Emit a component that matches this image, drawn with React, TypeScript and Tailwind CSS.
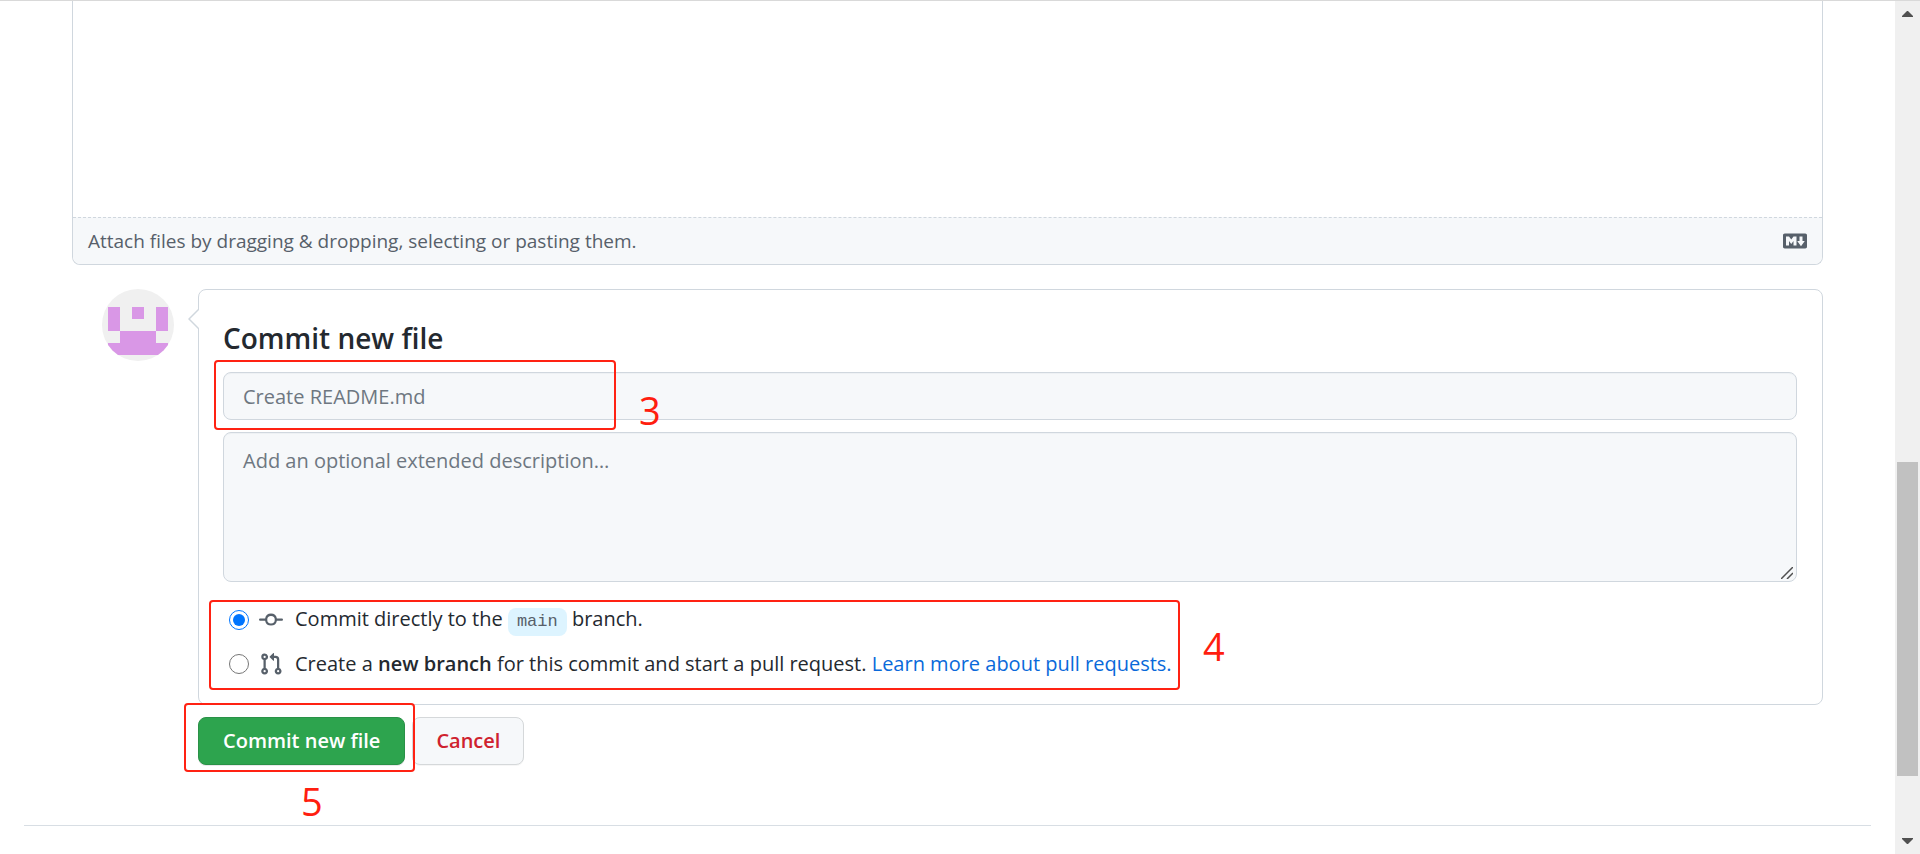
import type { ReactNode } from "react";

function CommitIcon() {
  return (
    <svg viewBox="0 0 16 16" className="size-6 shrink-0 fill-[#57606a]" aria-hidden="true">
      <path
        fillRule="evenodd"
        d="M10.5 7.75a2.5 2.5 0 11-5 0 2.5 2.5 0 015 0zm1.43.75a4.002 4.002 0 01-7.86 0H.75a.75.75 0 110-1.5h3.32a4.001 4.001 0 017.86 0h3.32a.75.75 0 110 1.5h-3.32z"
      />
    </svg>
  );
}

function PullRequestIcon() {
  return (
    <svg viewBox="0 0 16 16" className="size-6 shrink-0 fill-[#57606a]" aria-hidden="true">
      <path
        fillRule="evenodd"
        d="M7.177 3.073L9.573.677A.25.25 0 0110 .854v4.792a.25.25 0 01-.427.177L7.177 3.427a.25.25 0 010-.354zM3.75 2.5a.75.75 0 100 1.5.75.75 0 000-1.5zm-2.25.75a2.25 2.25 0 113 2.122v5.256a2.251 2.251 0 11-1.5 0V5.372A2.25 2.25 0 011.5 3.25zM11 2.5h-1V4h1a1 1 0 011 1v5.628a2.251 2.251 0 101.5 0V5A2.5 2.5 0 0011 2.5zm1 10.25a.75.75 0 111.5 0 .75.75 0 01-1.5 0zM3.75 12a.75.75 0 100 1.5.75.75 0 000-1.5z"
      />
    </svg>
  );
}

function MarkdownIcon() {
  return (
    <svg viewBox="0 0 16 16" className="size-6 fill-[#57606a]" aria-hidden="true">
      <path
        fillRule="evenodd"
        d="M14.85 3H1.15C.52 3 0 3.52 0 4.15v7.69C0 12.48.52 13 1.15 13h13.69c.64 0 1.15-.52 1.15-1.15v-7.7C16 3.52 15.48 3 14.85 3zM9 11H7V8L5.5 9.92 4 8v3H2V5h2l1.5 2L7 5h2v6zm2.99.5L9.5 8H11V5h2v3h1.5l-2.51 3.5z"
      />
    </svg>
  );
}

function Avatar() {
  return (
    <svg viewBox="0 0 72 72" className="size-[72px] shrink-0 rounded-full bg-[#f0f0f0]" aria-hidden="true">
      <path
        fill="#d997e6"
        d="M6 18h12v24H6zM30 18h12v12H30zM54 18h12v24H54zM18 42h36v12H18zM6 54h60v12H6z"
      />
    </svg>
  );
}

/* Red outline drawn over a step of the walkthrough, with its number. */
function Step({ box, label, children }: { box: string; label: string; children: ReactNode }) {
  return (
    <div className={`pointer-events-none absolute z-10 rounded-sm border-2 border-[#ff2213] ${box}`}>
      <span className={`absolute text-[38px] leading-10 text-[#ff1e10] ${label}`}>{children}</span>
    </div>
  );
}

function Scrollbar() {
  return (
    <div className="flex w-[25px] shrink-0 flex-col items-center bg-[#f0f0f0] py-[10px]" aria-hidden="true">
      <svg viewBox="0 0 11 6" className="h-[6px] w-[11px] fill-[#505050]">
        <path d="M5 0h1l5 5v1H0V5z" />
      </svg>
      <div className="grow-[446]" />
      <div className="w-[21px] grow-[314] bg-[#c1c1c1]" />
      <div className="grow-[62]" />
      <svg viewBox="0 0 11 6" className="h-[6px] w-[11px] fill-[#505050]">
        <path d="M0 0h11v1L6 6H5L0 1z" />
      </svg>
    </div>
  );
}

export default function App() {
  return (
    <div className="flex min-h-screen border-t border-[#d9d9d9] bg-white font-['Open_Sans','Noto_Sans',sans-serif] text-[20px] leading-7 text-[#24292f]">
      <main className="min-w-0 grow">
        <form className="px-[72px]" onSubmit={(e) => e.preventDefault()}>
          <div className="rounded-b-lg border-x border-b border-[#d0d7de]">
            <div className="h-[216px]" />
            <div className="flex h-[47px] items-center justify-between rounded-b-lg border-t border-dashed border-[#d0d7de] bg-[#f6f8fa] px-[15px] text-[19px] text-[#57606a]">
              <p>Attach files by dragging &amp; dropping, selecting or pasting them.</p>
              <a href="#markdown" aria-label="Styling with Markdown is supported">
                <MarkdownIcon />
              </a>
            </div>
          </div>

          <div className="mt-6 flex gap-6 pl-[30px]">
            <Avatar />
            <div className="relative grow rounded-lg border border-[#d0d7de] pt-6 pr-[25px] pb-[26px] pl-6">
              <svg viewBox="0 0 11 22" className="absolute top-[18px] -left-[11px] h-[22px] w-[11px]" aria-hidden="true">
                <path d="M11 1L1 11l10 10" fill="#fff" stroke="#d0d7de" strokeWidth="1.5" />
              </svg>
              <h3 className="text-[28px] leading-[48px] font-semibold">Commit new file</h3>

              <div className="relative mt-[10px]">
                <input
                  type="text"
                  aria-label="Commit message"
                  placeholder="Create README.md"
                  className="block h-12 w-full rounded-lg border border-[#d0d7de] bg-[#f6f8fa] px-[19px] shadow-[inset_0_1px_0_rgba(208,215,222,0.2)] placeholder:text-[#6e7781]"
                />
                <Step box="-top-3 -left-[9px] h-[70px] w-[402px]" label="top-7 left-full ml-[25px]">
                  3
                </Step>
              </div>

              <div className="relative mt-3">
                <textarea
                  aria-label="Commit description"
                  placeholder="Add an optional extended description…"
                  className="block h-[150px] w-full resize-none rounded-lg border border-[#d0d7de] bg-[#f6f8fa] px-[19px] py-[14px] shadow-[inset_0_1px_0_rgba(208,215,222,0.2)] placeholder:text-[#6e7781]"
                />
                <svg viewBox="0 0 12 12" className="absolute right-1 bottom-[3px] size-3" aria-hidden="true">
                  <path d="M0 12L12 0M6 12l6-6" stroke="#505050" strokeWidth="1.5" />
                </svg>
              </div>

              <div className="relative mt-6">
                <div className="flex h-7 items-center">
                  <input id="direct" type="radio" name="target" defaultChecked className="mr-[10px] ml-[6px] size-5 accent-[#0075ff]" />
                  <CommitIcon />
                  <label htmlFor="direct" className="ml-3">
                    Commit directly to the{" "}
                    <code className="inline-block rounded-lg bg-[#ddf4ff] px-[9px] font-['Liberation_Mono',monospace] text-[17px] leading-7 text-[#57606a]">
                      main
                    </code>{" "}
                    branch.
                  </label>
                </div>
                <div className="mt-4 flex h-7 items-center">
                  <input id="branch" type="radio" name="target" className="mr-[10px] ml-[6px] size-5 accent-[#0075ff]" />
                  <PullRequestIcon />
                  <p className="ml-3">
                    <label htmlFor="branch">
                      Create a <strong className="font-semibold">new branch</strong> for this commit and start a pull
                      request.
                    </label>{" "}
                    <a href="#pull-requests" className="text-[#0969da]">
                      Learn more about pull requests.
                    </a>
                  </p>
                </div>
                <Step box="-top-[6px] -left-[14px] h-[90px] w-[971px]" label="top-6 left-full ml-[25px]">
                  4
                </Step>
              </div>
            </div>
          </div>

          <div className="relative mt-3 ml-[126px] flex gap-[7px]">
            <button
              type="submit"
              className="h-12 rounded-lg border border-[#2a9147] bg-[#2da44e] px-6 font-semibold text-white shadow-[0_1px_0_rgba(27,31,36,0.1)]"
            >
              Commit new file
            </button>
            <button
              type="button"
              className="h-12 rounded-lg border border-[#d5d8da] bg-[#f6f8fa] px-[23px] font-semibold text-[#cf222e] shadow-[0_1px_0_rgba(27,31,36,0.04)]"
            >
              Cancel
            </button>
            <Step box="-top-[14px] -left-[14px] h-[69px] w-[231px]" label="top-19 left-[115px]">
              5
            </Step>
          </div>
        </form>
        <hr className="mx-6 mt-[60px] border-[#d8dee4]" />
      </main>
      <Scrollbar />
    </div>
  );
}
